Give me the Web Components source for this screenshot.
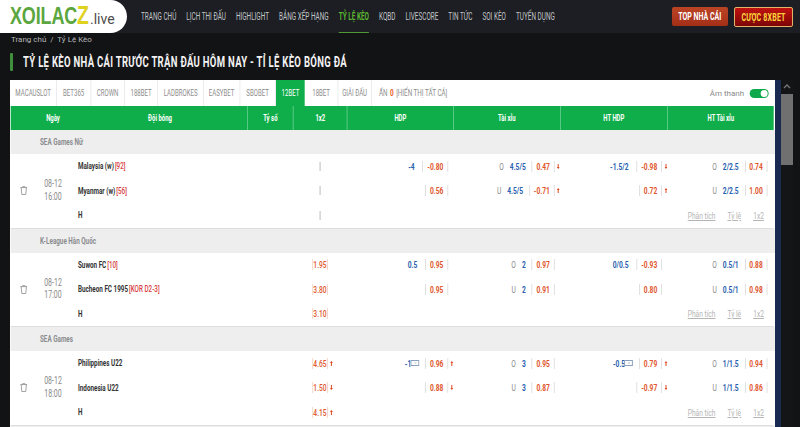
<!DOCTYPE html>
<html lang="vi">
<head>
<meta charset="utf-8">
<title>Tỷ lệ kèo</title>
<style>
  html, body { margin: 0; height: 427px; overflow: hidden; background: #121315; }
  body { font-family: Roboto, "Liberation Sans", sans-serif; }
</style>
</head>
<body>
<site-header>
  <nav-link>TRANG CHỦ</nav-link>
  <nav-link>LỊCH THI ĐẤU</nav-link>
  <nav-link>HIGHLIGHT</nav-link>
  <nav-link>BẢNG XẾP HẠNG</nav-link>
  <nav-link active>TỶ LỆ KÈO</nav-link>
  <nav-link>KQBD</nav-link>
  <nav-link>LIVESCORE</nav-link>
  <nav-link>TIN TỨC</nav-link>
  <nav-link>SOI KÈO</nav-link>
  <nav-link>TUYỂN DỤNG</nav-link>
</site-header>
<page-heading crumb="Trang chủ  /  Tỷ Lệ Kèo">TỶ LỆ KÈO NHÀ CÁI TRƯỚC TRẬN ĐẤU HÔM NAY - TỈ LỆ KÈO BÓNG ĐÁ</page-heading>
<odds-panel>
  <bet-tab w="47">MACAUSLOT</bet-tab>
  <bet-tab w="34">BET365</bet-tab>
  <bet-tab w="34">CROWN</bet-tab>
  <bet-tab w="33">188BET</bet-tab>
  <bet-tab w="46">LADBROKES</bet-tab>
  <bet-tab w="36">EASYBET</bet-tab>
  <bet-tab w="36">SBOBET</bet-tab>
  <bet-tab w="29" active>12BET</bet-tab>
  <bet-tab w="33">18BET</bet-tab>
  <bet-tab w="34">GIẢI ĐẤU</bet-tab>
  <league-row>SEA Games Nữ</league-row>
  <match-row id="m1"></match-row>
  <league-row>K-League Hàn Quốc</league-row>
  <match-row id="m2"></match-row>
  <league-row>SEA Games</league-row>
  <match-row id="m3"></match-row>
  <league-row></league-row>
</odds-panel>

<script>
// no condensed face is installed, so text blocks are squeezed with scaleX
// and --u (1px / factor) keeps the widths inside them in real pixels
const PANEL_SQUEEZE = 0.7;
const u = n => `calc(${n} * var(--u))`;

class NavLink extends HTMLElement {
  connectedCallback() {
    this.attachShadow({ mode: "open" }).innerHTML = `
      <style>
        :host { display: flex; align-items: center; height: 33px; box-sizing: border-box;
                color: #c3c5c8; font-size: 10px; white-space: nowrap; }
        :host([active]) { color: #5cb531; font-weight: 700; border-bottom: 1px solid #4f9a35; }
      </style><slot></slot>`;
  }
}

class SiteHeader extends HTMLElement {
  connectedCallback() {
    this.attachShadow({ mode: "open" }).innerHTML = `
      <style>
        :host { display: flex; align-items: flex-start; height: 33px; background: #1c1e23; }
        .logo { box-sizing: border-box; flex: none; width: 127px; height: 33px; background: #fff; border-radius: 0 17px 17px 0;
                display: flex; align-items: baseline; padding: 1px 0 0 10px; line-height: 29px; }
        .word { display: block; flex: none; width: 79px; white-space: nowrap; transform: scaleX(.75); transform-origin: 0 0;
                font: 700 24px/29px "Liberation Sans", sans-serif; color: #5ba63f; letter-spacing: -.2px; }
        .word b { color: #dfd21f; font-size: 26px; }
        .live { font: 400 14px Roboto, sans-serif; color: #4d4d4d; margin-left: 1px; }
        nav { flex: none; display: flex; gap: calc(10px / .64); margin-left: 14px; transform: scaleX(.64); transform-origin: 0 0;
              width: calc(525px / .64); margin-right: calc(525px - 525px / .64); }
        .btns { flex: none; margin-left: auto; display: flex; gap: 6px; padding: 7px 7px 0 0; }
        .btn { display: flex; align-items: center; justify-content: center; height: 19px; box-sizing: border-box;
               font-size: 10px; font-weight: 700; border-radius: 2px; white-space: nowrap; }
        .btn span { flex: none; transform: scaleX(.7); }
        .top { width: 56px; color: #fff; background: linear-gradient(#bb4424, #a32f18); }
        .bet { width: 59px; height: 20px; color: #ffd83d; background: linear-gradient(#c01210, #7c0505);
               border: 1px solid #e3b467; letter-spacing: .3px; }
      </style>
      <div class="logo"><span class="word">XOILAC<b>Z</b></span><span class="live">.live</span></div>
      <nav><slot></slot></nav>
      <div class="btns"><div class="btn top"><span>TOP NHÀ CÁI</span></div><div class="btn bet"><span>CƯỢC 8XBET</span></div></div>`;
  }
}

class PageHeading extends HTMLElement {
  connectedCallback() {
    const crumb = this.getAttribute("crumb");
    this.attachShadow({ mode: "open" }).innerHTML = `
      <style>
        :host { display: block; height: 47px; padding-left: 10px; box-sizing: border-box; overflow: hidden; }
        .crumb { font: 400 8px/12px Roboto, sans-serif; color: #b5b6b8; padding: 1px 0 0 1px; white-space: pre; }
        h1 { margin: 7px 0 0; display: flex; align-items: center; height: 18px; font-size: 14px; font-weight: 700;
             color: #f2f2f2; letter-spacing: .45px; white-space: nowrap; }
        h1::before { content: ""; flex: none; width: 3px; height: 18px; background: #3f8f3c; margin-right: 10px; border-radius: 1px; }
        h1 span { flex: none; transform: scaleX(.68); transform-origin: 0 50%; }
      </style>
      <div class="crumb">${crumb}</div>
      <h1><span><slot></slot></span></h1>`;
  }
}

class BetTab extends HTMLElement {
  connectedCallback() {
    this.attachShadow({ mode: "open" }).innerHTML = `
      <style>
        :host { display: flex; flex: none; align-items: center; justify-content: center; box-sizing: border-box;
                width: ${u(this.getAttribute("w"))}; height: 26px; border-right: 1px solid #e4e4e4;
                color: #8d8d8d; font-size: 8.7px; white-space: nowrap; }
        :host([active]) { background: #0fae4b; color: #fff; border-right: 0; }
      </style><slot></slot>`;
  }
}

class LeagueRow extends HTMLElement {
  connectedCallback() {
    this.attachShadow({ mode: "open" }).innerHTML = `
      <style>
        :host { display: flex; align-items: center; height: 24px; box-sizing: border-box; padding-left: ${u(29)};
                background: #eeeeee; color: #8a8c8e; font-size: 9px; font-weight: 700; margin-left: ${u(1)}; }
      </style><slot></slot>`;
  }
}

class OddsPanel extends HTMLElement {
  connectedCallback() {
    const heads = ["Tỷ số", "1x2", "HDP", "Tài xỉu", "HT HDP", "HT Tài xỉu"];
    this.attachShadow({ mode: "open" }).innerHTML = `
      <style>
        :host { display: flex; margin-left: 10px; height: 347px; overflow: hidden; --u: calc(1px / ${PANEL_SQUEEZE}); }
        .box { width: 765px; flex: none; overflow: hidden; }
        .panel { width: ${u(765)}; height: 347px; background: #fff; transform: scaleX(${PANEL_SQUEEZE}); transform-origin: 0 0; }
        .tabs { display: flex; height: 26px; }
        .hide { display: flex; align-items: center; gap: ${u(2.5)}; margin-left: ${u(7)}; font-size: 9px; color: #8d8d8d; white-space: nowrap; }
        .hide b { color: #ea5a22; }
        .sound { margin-left: auto; margin-right: ${u(6)}; display: flex; align-items: center; gap: 6px; flex: none;
                 transform: scaleX(${1 / PANEL_SQUEEZE}); transform-origin: 100% 50%;
                 font: 400 8px Roboto, sans-serif; color: #8a8a8a; }
        .toggle { width: 19px; height: 9px; border-radius: 5px; background: #0fa84a; display: flex; justify-content: flex-end;
                  align-items: center; padding-right: 1px; box-sizing: border-box; }
        .toggle i { width: 7px; height: 7px; border-radius: 50%; background: #fff; }
        .head { display: grid; grid-template-columns: ${[84, 152, 46, 54, 106, 107, 107, 107].map(u).join(" ")}; height: 23.5px;
                margin: 0 ${u(1)} .5px; background: #0fae4b; color: #fff; font-size: 8.5px; font-weight: 700; }
        .head span { display: flex; align-items: center; justify-content: center; border-left: 1px solid #79d59c; }
        .head span:nth-child(-n+2) { border-left: 0; }
        .head span:nth-child(2) { padding-right: ${u(22)}; }
        .navy { width: 6px; background: #19294f; flex: none; }
        .bar { width: 12px; background: #141517; flex: none; display: flex; flex-direction: column; align-items: center; }
        .bar svg { margin-top: 4px; }
        .bar i { display: block; width: 12px; height: 71px; background: #707070; margin-top: 5px; }
      </style>
      <div class="box">
        <div class="panel">
          <div class="tabs">
            <slot name="tabs"></slot>
            <div class="hide">ẨN <b>0</b> [HIỂN THỊ TẤT CẢ]</div>
            <div class="sound">Âm thanh<span class="toggle"><i></i></span></div>
          </div>
          <div class="head">
            <span>Ngày</span><span>Đội bóng</span>
            ${heads.map(h => `<span>${h}</span>`).join("")}
          </div>
          <slot></slot>
        </div>
      </div>
      <div class="navy"></div>
      <div class="bar"><svg width="8" height="5" viewBox="0 0 8 5"><path d="M1 4l3-3 3 3" fill="none" stroke="#777" stroke-width="1.3"/></svg><i></i></div>`;
    this.querySelectorAll("bet-tab").forEach(t => t.slot = "tabs");
  }
}

const ARROW = {
  up: `<svg viewBox="0 0 3 5" preserveAspectRatio="none"><path d="M1.5 0L3 2H2V5H1V2H0Z" fill="#de4a25"/></svg>`,
  down: `<svg viewBox="0 0 3 5" preserveAspectRatio="none"><path d="M1.5 5L3 3H2V0H1V3H0Z" fill="#de4a25"/></svg>`
};
const BOX = `<svg class="box" viewBox="0 0 9 6" preserveAspectRatio="none"><rect x=".5" y=".5" width="8" height="5" fill="#fff" stroke="#8da0bd"/><path d="M4 3h2" stroke="#9aa" stroke-width=".7"/></svg>`;

function oddsSpan(v, arrow) {
  return `<span class="odd">${v}</span><span class="arr">${arrow ? ARROW[arrow] : ""}</span>`;
}

class MatchRow extends HTMLElement {
  set data(d) {
    const cell = (kind, side, line, odd, arrow, box) => `
      <div class="c ${kind}">
        ${side ? `<span class="side">${side}</span>` : ""}
        ${line ? `<span class="line">${line}${box ? BOX : ""}</span>` : ""}
        ${oddsSpan(odd, arrow)}
      </div>`;
    const rows = d.rows.map((r, i) => {
      const tag = r.tag ? `<em>[${r.tag}]</em>` : "";
      const x12 = r.x12
        ? `<div class="c x12"><span class="odd">${r.x12[0]}</span><span class="arr">${r.x12[1] ? ARROW[r.x12[1]] : ""}</span></div>`
        : `<div class="c x12"></div>`;
      const body = r.hdp
        ? cell("hdp", "", r.hdp[0], r.hdp[1], r.hdp[2], r.hdp[3]) +
          cell("tx", r.tx[0], r.tx[1], r.tx[2], r.tx[3]) +
          cell("hdp h2", "", r.ht[0], r.ht[1], r.ht[2], r.ht[3]) +
          cell("tx t2", r.htx[0], r.htx[1], r.htx[2])
        : `<div class="links"><a>Phân tích</a><a>Tỷ lệ</a><a>1x2</a></div>`;
      return `<div class="team" style="grid-row:${i + 1}">${r.name}${tag}</div>
              <div style="grid-column:5;grid-row:${i + 1}" class="wrap">${x12}</div>
              <div class="rest" style="grid-row:${i + 1}">${body}</div>`;
    }).join("");
    this.shadowRoot.querySelector(".grid").innerHTML = `
      <div class="trash"><svg viewBox="0 0 8 9" preserveAspectRatio="none" fill="none" stroke="#8d8d8d" stroke-width=".8"><path d="M.5 1.6h7M1.4 1.6l.6 6.9h4l.6-6.9M2.9 1.6V.6h2.2v1"/></svg></div>
      <div class="date">${d.date}<br>${d.time}</div>
      ${rows}`;
  }
  constructor() {
    super();
    this.attachShadow({ mode: "open" }).innerHTML = `
      <style>
        :host { display: block; margin: 0 ${u(1)}; border-bottom: 1px solid #dedede; height: 74.5px; box-sizing: border-box; }
        .grid { display: grid; grid-template-columns: ${[25, 34, 177, 46, 54, 106, 107, 107, 107].map(u).join(" ")};
                grid-template-rows: repeat(3, 24.5px); font-size: 9.5px; }
        .trash { grid-column: 1; grid-row: 1 / 4; display: flex; align-items: center; justify-content: center; }
        .trash svg { width: ${u(8)}; height: 9px; }
        .date { grid-column: 2; grid-row: 1 / 4; align-self: center; text-align: center; color: #8a8a8a; font-size: 10px; line-height: 12.5px; }
        .team { grid-column: 3; display: flex; align-items: center; padding-left: ${u(8)}; font-size: 9px; font-weight: 700; color: #333; white-space: nowrap; }
        .team em { font-style: normal; font-weight: 500; color: #d8403f; font-size: 9px; margin-left: ${u(1)}; }
        .wrap { display: flex; justify-content: center; align-items: center; }
        .rest { grid-column: 6 / 10; display: flex; align-items: center; height: 100%; }
        .c { display: flex; flex: none; align-items: center; justify-content: flex-end; box-sizing: border-box; height: 100%; }
        .hdp { width: ${u(106)}; padding-right: ${u(5)}; }
        .hdp .line { margin-right: ${u(8)}; }
        .tx { width: ${u(107)}; padding-right: ${u(5.5)}; }
        .tx .line { margin-right: ${u(6)}; }
        .side { color: #8a8a8a; margin-right: ${u(6)}; }
        .h2 { width: ${u(107)}; padding-right: ${u(5)}; }
        .t2 { width: ${u(107)}; padding-right: ${u(6.5)}; }
        .x12 { justify-content: center; height: 9px; }
        .x12:empty { width: ${u(1.4)}; background: #cfcfcf; }
        .odd { color: #e0562c; font-weight: 700; padding: 0 ${u(4)}; border-left: 1px solid #d4d4d4; border-right: 1px solid #d4d4d4; line-height: 11px; }
        .x12 .odd { padding: 0 ${u(.5)}; font-weight: 500; border-color: #f0c8b8; }
        .arr { display: flex; flex: none; width: 0; overflow: visible; }
        .arr svg { flex: none; width: ${u(3)}; height: 5px; margin-left: ${u(2.5)}; }
        .line { color: #2a5fb0; font-weight: 700; display: flex; align-items: center; white-space: nowrap; }
        .line .box { flex: none; width: ${u(9)}; height: 6px; margin-left: ${u(-1)}; margin-right: ${u(-2)}; }
        .links { width: 100%; display: flex; justify-content: flex-end; gap: ${u(12)}; padding-right: ${u(10)}; box-sizing: border-box; }
        .links a { color: #b5b5b5; text-decoration: underline; }
      </style>
      <div class="grid"></div>`;
  }
}

customElements.define("nav-link", NavLink);
customElements.define("site-header", SiteHeader);
customElements.define("page-heading", PageHeading);
customElements.define("bet-tab", BetTab);
customElements.define("league-row", LeagueRow);
customElements.define("odds-panel", OddsPanel);
customElements.define("match-row", MatchRow);

document.getElementById("m1").data = {
  date: "08-12", time: "16:00",
  rows: [
    { name: "Malaysia (w)", tag: "92", hdp: ["-4", "-0.80"], tx: ["O", "4.5/5", "0.47", "down"], ht: ["-1.5/2", "-0.98", "down"], htx: ["O", "2/2.5", "0.74"] },
    { name: "Myanmar (w)", tag: "56", hdp: ["", "0.56"], tx: ["U", "4.5/5", "-0.71", "up"], ht: ["", "0.72", "up"], htx: ["U", "2/2.5", "1.00"] },
    { name: "H" }
  ]
};
document.getElementById("m2").data = {
  date: "08-12", time: "17:00",
  rows: [
    { name: "Suwon FC", tag: "10", x12: ["1.95"], hdp: ["0.5", "0.95"], tx: ["O", "2", "0.97"], ht: ["0/0.5", "-0.93"], htx: ["O", "0.5/1", "0.88"] },
    { name: "Bucheon FC 1995", tag: "KOR D2-3", x12: ["3.80"], hdp: ["", "0.95"], tx: ["U", "2", "0.91"], ht: ["", "0.80"], htx: ["U", "0.5/1", "0.98"] },
    { name: "H", x12: ["3.10"] }
  ]
};
document.getElementById("m3").data = {
  date: "08-12", time: "18:00",
  rows: [
    { name: "Philippines U22", x12: ["4.65", "up"], hdp: ["-1", "0.96", "up", true], tx: ["O", "3", "0.95"], ht: ["-0.5", "0.79", "up", true], htx: ["O", "1/1.5", "0.94"] },
    { name: "Indonesia U22", x12: ["1.50", "down"], hdp: ["", "0.88", "down"], tx: ["U", "3", "0.87"], ht: ["", "-0.97", "down"], htx: ["U", "1/1.5", "0.86"] },
    { name: "H", x12: ["4.15", "up"] }
  ]
};
</script>
</body>
</html>
